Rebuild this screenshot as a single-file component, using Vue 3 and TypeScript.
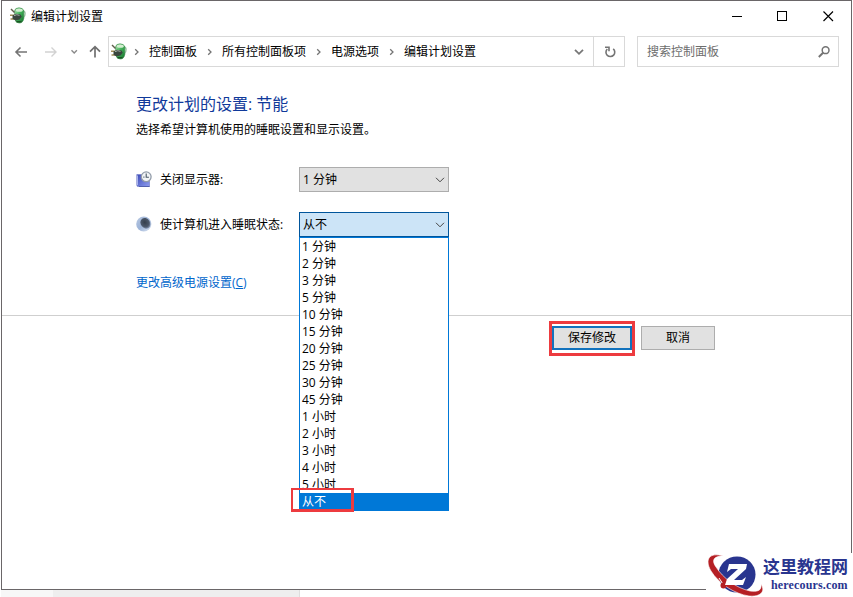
<script setup lang="ts">
import { ref } from 'vue'

const crumbs: string[] = ['控制面板', '所有控制面板项', '电源选项', '编辑计划设置']
const minutes: number[] = [1, 2, 3, 5, 10, 15, 20, 25, 30, 45]
const hours: number[] = [1, 2, 3, 4, 5]
const options: string[] = [
  ...minutes.map((m) => `${m} 分钟`),
  ...hours.map((h) => `${h} 小时`),
  '从不',
]
const display = ref<string>('1 分钟')
const sleep = ref<string>('从不')
</script>

<template>
  <div class="screen">
    <svg class="defs" width="0" height="0">
      <defs>
        <linearGradient id="leaf" x1="0" y1="0" x2="1" y2="1">
          <stop offset="0" stop-color="#b5e6b4" />
          <stop offset="0.45" stop-color="#45b45c" />
          <stop offset="1" stop-color="#13702a" />
        </linearGradient>
        <linearGradient id="monitor" x1="0" y1="0" x2="1" y2="1">
          <stop offset="0" stop-color="#3a49b5" />
          <stop offset="1" stop-color="#8f9df0" />
        </linearGradient>
        <linearGradient id="moon" x1="0" y1="0" x2="1" y2="1">
          <stop offset="0" stop-color="#b9c9e2" />
          <stop offset="0.5" stop-color="#9db4d8" />
          <stop offset="1" stop-color="#dfe7f3" />
        </linearGradient>
        <radialGradient id="shade" cx="0.5" cy="0.4" r="0.6">
          <stop offset="0" stop-color="#353f4c" />
          <stop offset="0.7" stop-color="#4c586b" />
          <stop offset="1" stop-color="#8b9bb8" />
        </radialGradient>
        <symbol id="power" viewBox="0 0 16 17">
          <path d="M12.500 3.500c3.300.5 3.500 5 .5 7.500" fill="none" stroke="#9fc4a6" stroke-width="1.400" />
          <path d="M4.500 4Q5 .8 9 .8T13.800 4v7.500Q13 16 9.200 16T5 12z" fill="url(#leaf)" stroke="#3b8a4b" stroke-width=".6" />
          <ellipse cx="9.300" cy="3.200" rx="3.500" ry="1.600" fill="#d3eed0" />
          <path d="M1 2l3.500 3.500" stroke="#5f5f4a" stroke-width="1.400" />
          <path d="M0 8.200h4M.5 12h4" stroke="#a08d55" stroke-width="1.400" />
          <path d="M2.500 8.500l3.500-1.700 4.500.7 1.300 2.200-2.300 2.800-4 .9-3-1.700z" fill="#3a463e" />
          <path d="M4 8.700l2.800-1 2.700.7" fill="none" stroke="#a4ada5" />
          <path d="M6.500 14.700h5" stroke="#1c5325" stroke-width="1.400" />
        </symbol>
      </defs>
    </svg>

    <div class="window">
      <header class="titlebar">
        <svg class="app-icon" width="16" height="17"><use href="#power" /></svg>
        <span class="title">编辑计划设置</span>
        <svg class="controls" width="104" height="12" viewBox="0 0 104 12" fill="none" stroke="#000" shape-rendering="crispEdges">
          <path d="M1 6.500h10" />
          <rect x="46.500" y="1.500" width="9" height="9" />
          <path d="M92.500 1.500l9.500 9.500M102 1.500l-9.500 9.500" shape-rendering="auto" stroke-width="1.150" />
        </svg>
      </header>

      <nav class="navbar">
        <svg class="arrows" width="106" height="31" viewBox="0 0 106 31" fill="none">
          <path d="M25 16H14M18.500 11.500L14 16l4.500 4.500" stroke="#747474" stroke-width="1.600" />
          <path d="M43 16h11M49.500 11.500L54 16l-4.500 4.500" stroke="#d2d2d2" stroke-width="1.400" />
          <path d="M69.500 14.200l2.700 2.700 2.700-2.700" stroke="#8a8a8a" stroke-width="1.400" />
          <path d="M93 21.500V11M88 15.700l5-5 5 5" stroke="#707070" stroke-width="1.700" />
        </svg>
        <div class="address">
          <svg class="address-icon" width="16" height="17"><use href="#power" /></svg>
          <template v-for="c in crumbs" :key="c">
            <svg class="sep" width="6" height="8" viewBox="0 0 6 8" fill="none" stroke="#747474" stroke-width="1.300"><path d="M1.200 1.200L4 4 1.200 6.800" /></svg>
            <span>{{ c }}</span>
          </template>
          <svg class="history" width="10" height="8" viewBox="0 0 10 8" fill="none" stroke="#777" stroke-width="1.800"><path d="M1 1.800l4 4 4-4" /></svg>
          <div class="refresh">
            <svg width="12" height="12" viewBox="0 0 12 12" fill="none" stroke="#747474" stroke-width="1.600">
              <path d="M9.200 2.800A4.400 4.400 0 1 1 3.300 3" />
              <path d="M1 1.300h4v4" />
            </svg>
          </div>
        </div>
        <div class="search">
          <span>搜索控制面板</span>
          <svg width="12" height="12" viewBox="0 0 12 12" fill="none" stroke="#747474">
            <circle cx="7.600" cy="4.200" r="3.400" stroke-width="1.500" />
            <path d="M5.300 6.500L.8 11" stroke-width="1.900" />
          </svg>
        </div>
      </nav>

      <main class="content">
        <h1>更改计划的设置: 节能</h1>
        <p class="desc">选择希望计算机使用的睡眠设置和显示设置。</p>

        <div class="setting">
          <svg width="17" height="17" viewBox="0 0 17 17">
            <path d="M.8 3.500H10l3.500 6v6H2Q.8 15.500.8 14z" fill="url(#monitor)" stroke="#7883cc" stroke-width=".7" />
            <path d="M1.500 4.500v9.500" stroke="#a9b4ec" />
            <path d="M3 15.500h10.500" stroke="#5260ad" />
            <circle cx="10.200" cy="5.800" r="4.900" fill="#f2f4f6" stroke="#929ca9" stroke-width="1.300" />
            <path d="M10.200 2.600v3.700h2.700M7.400 6.100h1" fill="none" stroke="#4b5966" stroke-width="1.100" />
          </svg>
          <label>关闭显示器:</label>
          <div class="select">
            <span>{{ display }}</span>
            <svg width="10" height="6" viewBox="0 0 10 6" fill="none" stroke="#444"><path d="M1 .8l4 4 4-4" /></svg>
          </div>
        </div>

        <div class="setting second">
          <svg width="17" height="17" viewBox="0 0 17 17">
            <circle cx="7.800" cy="8" r="7.600" fill="url(#moon)" />
            <ellipse cx="9.400" cy="7.300" rx="4.700" ry="5.700" transform="rotate(-35 9.400 7.300)" fill="url(#shade)" />
          </svg>
          <label>使计算机进入睡眠状态:</label>
          <div class="select open">
            <span>{{ sleep }}</span>
            <svg width="10" height="6" viewBox="0 0 10 6" fill="none" stroke="#444"><path d="M1 .8l4 4 4-4" /></svg>
            <ul class="menu">
              <li v-for="o in options" :key="o" :class="{ active: o === sleep }">{{ o }}</li>
              <li class="mark" aria-hidden="true"></li>
            </ul>
          </div>
        </div>

        <a class="advanced">更改高级电源设置(<u>C</u>)</a>
      </main>

      <footer class="actions">
        <div class="highlight"><button class="primary">保存修改</button></div>
        <button>取消</button>
      </footer>
    </div>

    <div class="behind"><span></span></div>

    <aside class="brand">
      <svg width="58" height="44" viewBox="0 0 58 44">
        <ellipse cx="31" cy="21.500" rx="18.500" ry="18" fill="#29358f" />
        <path d="M17 3C4-1-2 6 5 18c8 13 24 23 38 25 11 1 17-4 12-12 1 7-4 8-11 7C30 35 17 25 10 14 5 7 8 3 17 3z" fill="#b51f24" stroke="#fff" stroke-width=".6" />
        <path d="M13 25l6 9M15 34l6-3" stroke="#fff" stroke-width="1" />
        <circle cx="17.500" cy="32.500" r="3" fill="#b51f24" />
        <path d="M23 11h18l-1 5-12 11h8l4-3-3 8H19l2-6 11-10h-7l-4 3z" fill="#fff" />
      </svg>
      <div class="brand-text">
        <strong>这里教程网</strong>
        <em>herecours.com</em>
      </div>
    </aside>
  </div>
</template>

<style>
body {
  margin: 0;
  overflow: hidden;
}
</style>

<style scoped>
* {
  box-sizing: border-box;
}
.screen {
  position: relative;
  width: 853px;
  height: 597px;
  padding-left: 1px;
  overflow: hidden;
  background: #fff;
  color: #000;
  font: 12px/17px 'Open Sans', 'Noto Sans CJK SC', sans-serif;
  white-space: nowrap;
}
.defs {
  position: absolute;
}
.window {
  width: 851px;
  height: 590px;
  border: 1px solid #6a6668;
  background: #fff;
}
.titlebar {
  display: flex;
  align-items: center;
  height: 30px;
  padding: 0 16px 0 8px;
}
.app-icon {
  margin-top: -1px;
}
.title {
  margin-left: 5px;
}
.controls {
  margin: -1px 0 0 auto;
}
.navbar {
  display: flex;
  height: 31px;
  margin-top: 5px;
}
.address {
  display: flex;
  align-items: center;
  width: 517px;
  padding: 0 0 1px 2px;
  border: 1px solid #d9d9d9;
}
.sep {
  margin: 1px 9px 0 10px;
}
.address-icon + .sep {
  margin-left: 7px;
}
.history {
  margin: 2px 9px 0 auto;
}
.refresh {
  display: flex;
  align-items: center;
  justify-content: center;
  width: 31px;
  height: 29px;
  margin-bottom: -1px;
  padding-left: 1px;
  border-left: 1px solid #d9d9d9;
}
.search {
  display: flex;
  align-items: center;
  justify-content: space-between;
  width: 202px;
  margin-left: 12px;
  padding: 0 8px 0 9px;
  border: 1px solid #d9d9d9;
  color: #6d6d6d;
}
.content {
  height: 249px;
  padding: 25px 0 0 134px;
  border-bottom: 1px solid #cfcfcf;
}
h1 {
  margin: 0;
  color: #10399a;
  font-size: 16px;
  font-weight: 400;
  line-height: 24px;
}
.desc {
  margin: 5px 0 0;
}
.setting {
  display: flex;
  align-items: center;
  height: 25px;
  margin-top: 29px;
}
.second {
  margin-top: 20px;
}
.setting label {
  width: 139px;
  margin-left: 7px;
}
.select {
  position: relative;
  display: flex;
  align-items: center;
  justify-content: space-between;
  width: 150px;
  height: 25px;
  padding: 0 3px;
  border: 1px solid #adadad;
  background: #e1e1e1;
}
.open {
  border-color: #00559b;
  background: #cce4f7;
}
.menu {
  position: absolute;
  z-index: 1;
  top: 24px;
  left: -1px;
  width: 150px;
  margin: 0;
  padding: 0;
  border: 1px solid #0078d7;
  background: #fff;
  list-style: none;
}
.menu li {
  height: 17px;
  padding-left: 2px;
}
.menu .active {
  background: #0078d7;
  color: #fff;
}
.menu .mark {
  position: absolute;
  bottom: -2px;
  left: -9px;
  width: 63px;
  height: 24px;
  padding: 0;
  border: 3px solid #ed3b3f;
  border-width: 2px 3px 3px 2px;
}
.advanced {
  display: inline-block;
  margin-top: 37px;
  color: #0066cc;
}
.actions {
  display: flex;
  align-items: flex-start;
  gap: 6px;
  padding: 5px 0 0 547px;
}
.highlight {
  padding: 2px 0 3px;
  border: 3px solid #ed3b3f;
}
button {
  display: block;
  width: 74px;
  height: 24px;
  margin-top: 5px;
  padding: 0;
  border: 1px solid #adadad;
  background: #e1e1e1;
  color: #000;
  font: inherit;
  line-height: 20px;
}
.primary {
  width: 80px;
  margin: 0;
  border: 2px solid #1272bd;
}
.behind {
  width: 299px;
  height: 7px;
  padding-left: 52px;
  background: #f7f7f7;
}
.behind span {
  display: block;
  height: 7px;
  border-right: 1px solid #dedede;
  background: #eee;
}
.brand {
  position: absolute;
  right: 0;
  bottom: 0;
  display: flex;
  width: 147px;
  height: 44px;
  background: #fff;
}
.brand-text {
  display: flex;
  flex-direction: column;
  margin-left: -1px;
  color: #29358f;
}
.brand-text strong {
  font: 700 17px/26px 'Noto Sans CJK SC', sans-serif;
}
.brand-text em {
  padding-left: 8px;
  font: 700 12px/12px 'Liberation Serif', serif;
  letter-spacing: 0.15px;
}
</style>
